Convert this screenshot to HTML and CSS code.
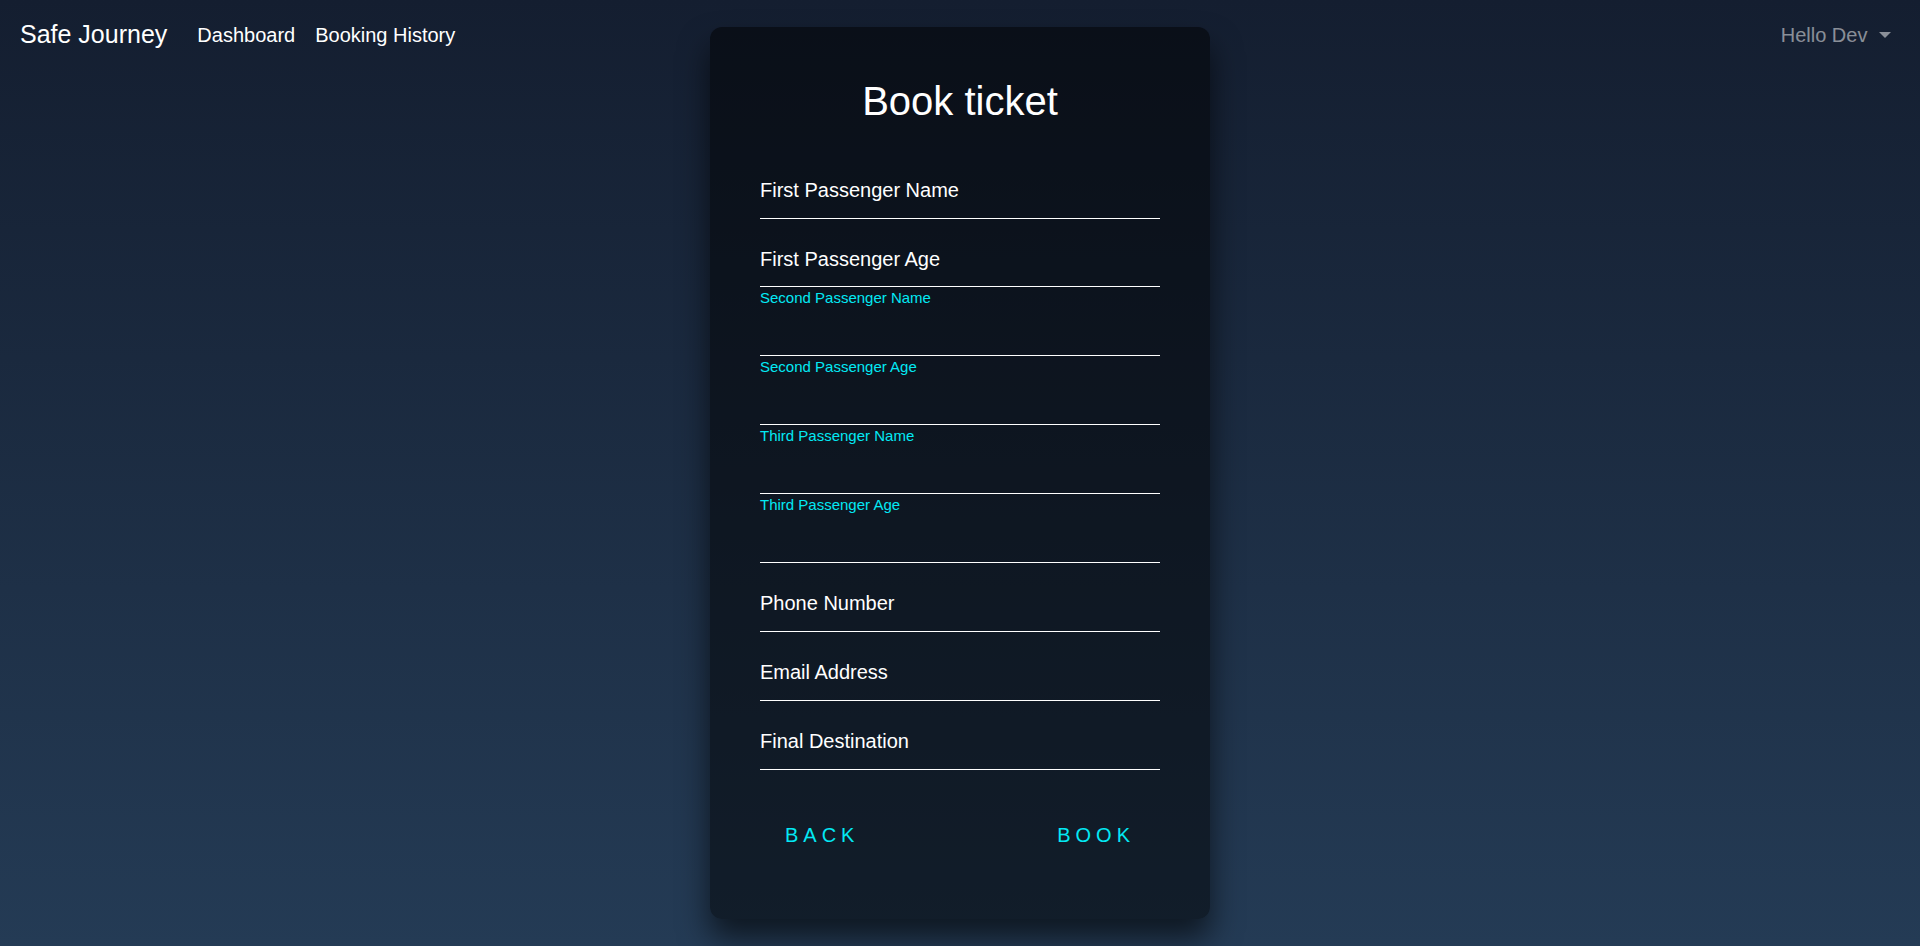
FILE: index.html
```html
<!DOCTYPE html>
<html lang="en">
<head>
<meta charset="utf-8">
<title>Book ticket</title>
<link rel="stylesheet" href="styles.css">
</head>
<body>
<nav class="navbar">
  <a class="brand" href="#">Safe Journey</a>
  <ul class="nav">
    <li><a class="nav-link" href="#">Dashboard</a></li>
    <li><a class="nav-link" href="#">Booking History</a></li>
  </ul>
  <div class="user">
    <a class="nav-link muted" href="#">Hello Dev <span class="caret"></span></a>
  </div>
</nav>
<main class="page">
  <div class="card">
    <h2 class="title">Book ticket</h2>
    <form class="form">
      <div class="field"><input type="text"><label>First Passenger Name</label></div>
      <div class="field"><input type="text"><label>First Passenger Age</label></div>
      <div class="field"><input type="text"><label class="floated">Second Passenger Name</label></div>
      <div class="field"><input type="text"><label class="floated">Second Passenger Age</label></div>
      <div class="field"><input type="text"><label class="floated">Third Passenger Name</label></div>
      <div class="field"><input type="text"><label class="floated">Third Passenger Age</label></div>
      <div class="field"><input type="text"><label>Phone Number</label></div>
      <div class="field"><input type="text"><label>Email Address</label></div>
      <div class="field"><input type="text"><label>Final Destination</label></div>
      <div class="actions">
        <a class="btn" href="#">Back</a>
        <a class="btn" href="#">Book</a>
      </div>
    </form>
  </div>
</main>
</body>
</html>
```
FILE: styles.css
```css
* { box-sizing: border-box; }
html, body { margin: 0; padding: 0; }
body {
  font-family: "Liberation Sans", Arial, sans-serif;
  font-size: 20px;
  line-height: 1.5;
  color: #fff;
  min-height: 100vh;
  background: linear-gradient(#141e30, #243b55);
  overflow: hidden;
}
a { text-decoration: none; }

.navbar {
  position: absolute;
  top: 0; left: 0; right: 0;
  display: flex;
  align-items: center;
  padding: 10px 20px;
  height: 70px;
}
.brand {
  color: #fff;
  font-size: 25px;
  line-height: 37.5px;
  padding: 6.25px 0;
  margin-right: 20px;
}
.nav {
  list-style: none;
  margin: 0; padding: 0;
  display: flex;
}
.nav-link {
  display: block;
  color: #fff;
  padding: 10px;
  line-height: 30px;
}
.user { margin-left: auto; }
.nav-link.muted { color: rgba(255,255,255,.5); padding-left: 11px; padding-right: 9px; }
.caret {
  display: inline-block;
  width: 0; height: 0;
  margin-left: 6px;
  vertical-align: 4px;
  border-top: 6px solid rgba(255,255,255,.5);
  border-left: 6px solid transparent;
  border-right: 6px solid transparent;
}

.page {
  height: 100vh;
  display: grid;
  place-items: center;
}
.card {
  width: 500px;
  padding: 49.5px 50px 59px;
  background: rgba(0,0,0,.5);
  border-radius: 12px;
  box-shadow: 0 19px 31px rgba(0,0,0,.6);
}
.title {
  margin: 0 0 25.1px;
  font-size: 40px;
  line-height: 48px;
  font-weight: normal;
  text-align: center;
  color: #fff;
}
.form { display: flex; flex-direction: column; }
.field {
  position: relative;
  height: 68.9px;
  display: flex;
  align-items: flex-end;
}
.field input {
  display: block;
  width: 100%;
  height: 40px;
  padding: 0;
  font: inherit;
  color: #fff;
  background: transparent;
  border: none;
  border-bottom: 1px solid #fff;
  outline: none;
}
.field label {
  position: absolute;
  left: 0;
  top: 28.2px;
  font-size: 20px;
  line-height: 24px;
  color: #fff;
  pointer-events: none;
}
.field label.floated {
  top: 2px;
  font-size: 15px;
  line-height: 18px;
  color: #03e9f4;
}
.actions {
  display: flex;
  justify-content: space-between;
  margin-top: 41.2px;
}
.btn {
  display: inline-block;
  padding: 12.5px 25px;
  font-size: 20px;
  line-height: 24px;
  letter-spacing: 5px;
  text-transform: uppercase;
  color: #03e9f4;
}
```
